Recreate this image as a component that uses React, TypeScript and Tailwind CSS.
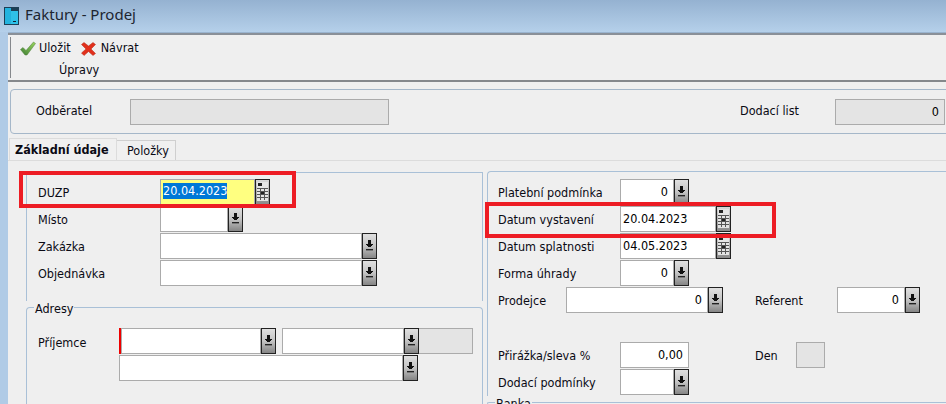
import type { ReactNode } from "react";

const fontStack = "[font-family:'DejaVu_Sans_Condensed','Liberation_Sans',sans-serif]";

function ArrowButton() {
  return (
    <div className="w-[15px] h-[26px] shrink-0 border border-[#222] bg-gradient-to-b from-[#e0e0e0] via-[#c4c4c4] to-[#858585] flex items-center justify-center">
      <svg width="9" height="12" viewBox="0 0 9 12" shapeRendering="crispEdges">
        <path d="M3 0h3v4h2v1H7v1H6v1H3V6H2V5H1V4h2z" fill="#111" />
        <rect x="1" y="9" width="7" height="1" fill="#222" />
        <rect x="1" y="10" width="7" height="1" fill="#777" />
      </svg>
    </div>
  );
}

function CalendarButton() {
  return (
    <div className="w-[15px] h-[26px] shrink-0 border border-[#222] bg-gradient-to-b from-[#d8d8d8] to-[#8a8a8a] flex items-center justify-center">
      <svg width="11" height="19" viewBox="0 0 11 19" shapeRendering="crispEdges">
        <rect x="0" y="0" width="11" height="19" fill="#e4e4e4" />
        <rect x="1" y="1" width="4" height="3" fill="#222" />
        <path d="M0 6h11v1H0zM0 9h11v1H0zM0 12h11v1H0zM0 15h11v1H0zM3 6h1v12H3zM7 6h1v12H7z" fill="#555" />
        <rect x="4" y="10" width="3" height="2" fill="#222" />
      </svg>
    </div>
  );
}

type FieldProps = {
  width: number;
  value?: string;
  className?: string;
  align?: "left" | "right";
};

// width arrives from the data of each row, so it stays inline
function Field({ width, value, className = "bg-white", align = "left" }: FieldProps) {
  return (
    <div
      style={{ width }}
      className={`h-[26px] shrink-0 border border-[#ababab] flex items-center px-[2px] pt-[1px] text-[12.5px] text-black ${className} ${
        align === "right" ? "justify-end pr-[5px]" : ""
      }`}
    >
      {value}
    </div>
  );
}

function Row({ label, labelWidth = 122, children }: { label?: string; labelWidth?: number; children: ReactNode }) {
  return (
    <div className="flex items-center h-[27px]">
      {label !== undefined && (
        <span style={{ width: labelWidth }} className="shrink-0 pt-[3px] text-[12.5px] text-[#0a0a14]">
          {label}
        </span>
      )}
      {children}
    </div>
  );
}

function RedFrame({ className }: { className: string }) {
  return <div className={`absolute border-[4px] border-[#ed1c24] ${className}`} />;
}

export default function App() {
  return (
    <div className={`relative w-[946px] h-[404px] overflow-hidden flex flex-col bg-[#b0cbe6] ${fontStack}`}>
      <header className="h-[32px] shrink-0 flex items-center pl-[4px] gap-[5px] bg-gradient-to-b from-[#95b2d1] to-[#b5d0ea]">
        <svg width="16" height="18" viewBox="0 0 16 18" shapeRendering="crispEdges">
          <rect x="0" y="0" width="15" height="18" fill="#1c3f56" />
          <rect x="1" y="1" width="6" height="16" fill="#23b3de" />
          <rect x="7" y="4" width="7" height="13" fill="#2fc1e8" />
          <rect x="9" y="14" width="3" height="1" fill="#123" />
        </svg>
        <span className="text-[#1d2530] text-[15px] [font-family:'Noto_Sans',sans-serif] leading-none mb-[3px]">Faktury - Prodej</span>
      </header>

      <main className="flex-1 ml-[8px] bg-[#efefef] flex flex-col min-h-0">
        <div className="h-[3px] shrink-0 bg-[#8a9098] border-t border-[#9ab4cf]" />

        {/* toolbar */}
        <div className="h-[47px] shrink-0 pl-[2px] pt-[2px] border-b-[2px] border-[#85888c]">
          <div className="h-[41px] border-l border-[#85888c] pl-[9px] text-[12.5px] text-[#0a0a14]">
            <div className="flex items-center h-[23px]">
              <svg width="16" height="15" viewBox="0 0 16 15">
                <defs>
                  <linearGradient id="check" x1="1" y1="0" x2="0" y2="1">
                    <stop offset="0" stopColor="#9ad55e" />
                    <stop offset="1" stopColor="#3f7f35" />
                  </linearGradient>
                </defs>
                <path d="M0.500 8.500L3 6.500l3 3L13.500 1l2 1.500L7 14H5z" fill="url(#check)" stroke="#4c7f3a" strokeWidth="0.5" />
              </svg>
              <span className="ml-[3px]">Uložit</span>
              <svg className="ml-[10px]" width="15" height="14" viewBox="0 0 15 14">
                <path d="M.5 2.500L3 .5l4.500 3.500L12 .5l2.500 2L10 7l4.500 4.500L12 13.500 7.500 9.500 3 13.500.5 11 5 7z" fill="#e2301c" stroke="#b02412" strokeWidth="0.5" />
              </svg>
              <span className="ml-[5px]">Návrat</span>
            </div>
            <div className="pl-[39px] mt-[1px]">Úpravy</div>
          </div>
        </div>

        {/* customer header */}
        <div className="h-[45px] shrink-0 mt-[7px] ml-[2px] -mr-[10px] border border-[#a5b7c9] rounded-tl-[4px] rounded-bl-[4px] flex items-center pl-[25px]">
          <span className="w-[94px] text-[12.5px] text-[#0a0a14]">Odběratel</span>
          <Field width={259} className="bg-[#e4e4e4]" />
          <span className="ml-[351px] w-[95px] text-[12.5px] text-[#0a0a14]">Dodací list</span>
          <Field width={110} value="0" align="right" className="bg-[#e4e4e4]" />
        </div>

        {/* tabs */}
        <div className="h-[22px] mt-[4px] shrink-0 flex items-end pl-[1px]">
          <div className="w-[108px] h-[22px] border-x border-t border-[#dcdcdc] bg-[#f0f0f0] pl-[5px] pt-[2px] text-[12.5px] font-bold text-[#0a0a14]">
            Základní údaje
          </div>
          <div className="w-[59px] h-[20px] border-t border-r border-[#cfcfcf] bg-[#f0f0f0] pl-[10px] pt-[1px] text-[12.5px] text-[#0a0a14]">
            Položky
          </div>
        </div>

        {/* tab panel */}
        <div className="flex-1 min-h-0 border-t border-[#dcdcdc] flex pl-[18px] pt-[11px]">
          <div className="w-[457px] shrink-0 flex flex-col">
            <div className="h-[129px] shrink-0 border-x border-t border-[#a9c0d7] pl-[11px] pt-[5px]">
              <Row label="DUZP">
                <Field width={95} className="bg-[#ffff80]" />
                <CalendarButton />
              </Row>
              <Row label="Místo">
                <Field width={68} />
                <ArrowButton />
              </Row>
              <Row label="Zakázka">
                <Field width={202} />
                <ArrowButton />
              </Row>
              <Row label="Objednávka">
                <Field width={202} />
                <ArrowButton />
              </Row>
            </div>

            <div className="relative mt-[6px] flex-1 border-x border-t border-[#a9c0d7] rounded-t-[4px] pl-[11px] pt-[20px]">
              <span className="absolute left-[7px] -top-[8px] bg-[#efefef] px-[1px] text-[12.5px] text-[#0a0a14]">Adresy</span>
              <div className="flex">
                <span className="w-[81px] shrink-0 text-[12.5px] text-[#0a0a14] pt-[6px]">Příjemce</span>
                <div className="flex flex-col gap-[1px]">
                  <div className="flex">
                    <div className="w-[2px] h-[26px] bg-[#ee0000]" />
                    <Field width={140} />
                    <ArrowButton />
                    <div className="w-[6px]" />
                    <Field width={122} />
                    <ArrowButton />
                    <Field width={54} className="bg-[#e4e4e4] border-l-0" />
                  </div>
                  <div className="flex">
                    <Field width={284} />
                    <ArrowButton />
                  </div>
                </div>
              </div>
            </div>
          </div>

          <div className="ml-[4px] flex-1 flex flex-col -mr-[20px] -mt-[1px]">
            <div className="h-[225px] shrink-0 border-l border-t border-[#a9c0d7] rounded-tl-[4px] pl-[10px] pt-[6px]">
              <Row label="Platební podmínka">
                <Field width={54} value="0" align="right" />
                <ArrowButton />
              </Row>
              <Row label="Datum vystavení">
                <Field width={96} value="20.04.2023" className="bg-white" />
                <CalendarButton />
              </Row>
              <Row label="Datum splatnosti">
                <Field width={96} value="04.05.2023" className="bg-white" />
                <CalendarButton />
              </Row>
              <Row label="Forma úhrady">
                <Field width={54} value="0" align="right" />
                <ArrowButton />
              </Row>
              <Row label="Prodejce" labelWidth={68}>
                <Field width={142} value="0" align="right" />
                <ArrowButton />
                <span className="ml-[32px] w-[82px] shrink-0 pt-[3px] text-[12.5px] text-[#0a0a14]">Referent</span>
                <Field width={68} value="0" align="right" />
                <ArrowButton />
              </Row>
              <div className="h-[28px]" />
              <Row label="Přirážka/sleva %">
                <Field width={69} value="0,00" align="right" />
                <span className="ml-[66px] w-[41px] shrink-0 pt-[3px] text-[12.5px] text-[#0a0a14]">Den</span>
                <Field width={29} className="bg-[#e4e4e4]" />
              </Row>
              <Row label="Dodací podmínky">
                <Field width={54} />
                <ArrowButton />
              </Row>
            </div>
            <div className="relative mt-[6px] flex-1 border-l border-t border-[#a9c0d7] rounded-tl-[4px]">
              <span className="absolute left-[7px] -top-[6px] bg-[#efefef] px-[1px] text-[12.5px] text-[#0a0a14] leading-[14px]">Banka</span>
            </div>
          </div>
        </div>
      </main>

      {/* selected date, sits on the yellow input */}
      <span className="absolute left-[163px] top-[183px] h-[16px] leading-[16px] bg-[#0078d7] text-white text-[12.5px]">20.04.2023</span>

      <RedFrame className="left-[19px] top-[171px] w-[277px] h-[37px]" />
      <RedFrame className="left-[485px] top-[202px] w-[291px] h-[36px]" />
    </div>
  );
}
